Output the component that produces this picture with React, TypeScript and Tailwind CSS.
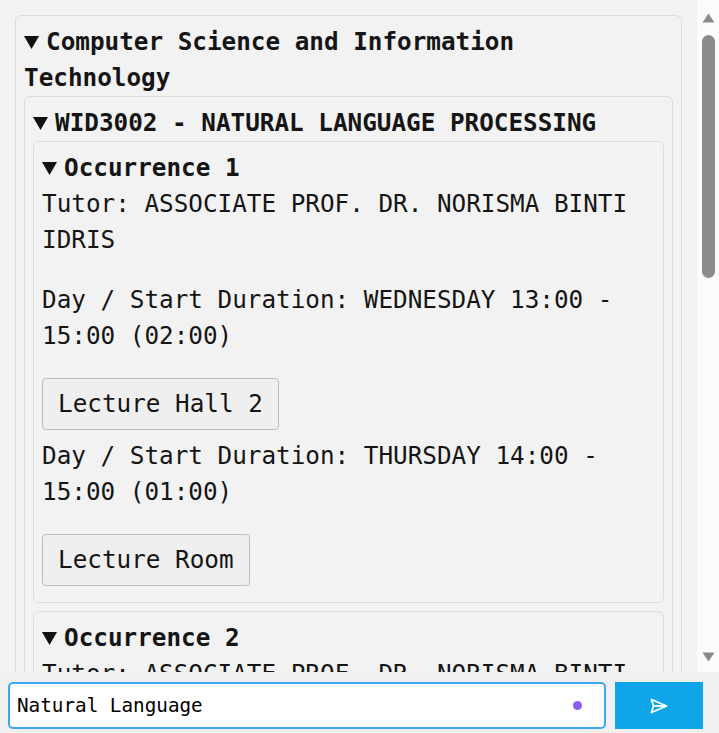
import React from "react";

const font = { fontFamily: '"DejaVu Sans Mono", "Liberation Mono", monospace' };

function Summary({ children }: { children: React.ReactNode }) {
  return (
    <summary className="block list-none font-bold [&::-webkit-details-marker]:hidden">
      <svg width="15" height="13" viewBox="0 0 15 13" className="mr-[7px] inline-block align-[1px]">
        <path d="M0 0 L15 0 L7.5 13 Z" fill="#111" />
      </svg>
      {children}
    </summary>
  );
}

function Session({ day, room }: { day: string; room: string }) {
  return (
    <>
      <p className="mb-6">{day}</p>
      <button className="mb-2 block rounded-[4px] border border-[#bdbdbd] bg-[#efefef] px-[15px] py-2 text-left leading-[34px]">
        {room}
      </button>
    </>
  );
}

function Occurrence({ n }: { n: number }) {
  return (
    <details open className="rounded-[6px] border border-[#dcdcdc] p-2">
      <Summary>Occurrence {n}</Summary>
      <p className="mb-6">Tutor: ASSOCIATE PROF. DR. NORISMA BINTI IDRIS</p>
      <Session day="Day / Start Duration: WEDNESDAY 13:00 - 15:00 (02:00)" room="Lecture Hall 2" />
      <Session day="Day / Start Duration: THURSDAY 14:00 - 15:00 (01:00)" room="Lecture Room" />
    </details>
  );
}

export default function App() {
  return (
    <div
      className="flex h-[733px] w-[719px] flex-col overflow-hidden bg-[#f2f2f2] text-[24.3px] leading-[36px] text-[#151515]"
      style={font}
    >
      <div className="flex min-h-0 flex-1">
        <div className="min-w-0 flex-1 overflow-hidden px-[15px] pt-[15px]">
          <details open className="rounded-[6px] border border-[#dcdcdc] p-2">
            <Summary>Computer Science and Information Technology</Summary>
            <details open className="rounded-[6px] border border-[#dcdcdc] p-2">
              <Summary>WID3002 - NATURAL LANGUAGE PROCESSING</Summary>
              <div className="flex flex-col gap-2">
                <Occurrence n={1} />
                <Occurrence n={2} />
              </div>
            </details>
          </details>
        </div>
        <div className="flex w-[22px] flex-col items-center bg-[#fbfbfb] pt-[13px] pb-[10px]">
          <svg width="13" height="10" viewBox="0 0 13 10">
            <path d="M6.5 0.5 L12.5 9.5 L0.5 9.5 Z" fill="#8a8a8a" />
          </svg>
          <div className="mt-[12px] h-[243px] w-[13px] rounded-full bg-[#8c8c8c]" />
          <div className="flex-1" />
          <svg width="13" height="10" viewBox="0 0 13 10">
            <path d="M0.5 0.5 L12.5 0.5 L6.5 9.5 Z" fill="#8a8a8a" />
          </svg>
        </div>
      </div>
      <div className="flex h-[61px] shrink-0 items-start gap-[9px] bg-[#f0f0f0] pt-[10px] pr-4 pl-2">
        <div className="relative h-[47px] flex-1">
          <input
            defaultValue="Natural Language"
            className="h-full w-full rounded-[5px] border-2 border-[#3aa8ef] bg-white pl-[7px] text-[19.3px] text-black outline-none"
            style={font}
          />
          <div className="absolute top-[19px] right-[24px] h-[9px] w-[9px] rounded-full bg-[#8b5cf6]" />
        </div>
        <button className="flex h-[47px] w-[88px] items-center justify-center bg-[#0ea5e9]">
          <svg width="18" height="16" viewBox="0 0 18 16" fill="none" stroke="white" strokeWidth="1.8" strokeLinejoin="round">
            <path d="M1.5 1.5 L16.5 8 L1.5 14.5 L3.5 8 Z" />
            <path d="M3.5 8 L16.5 8" />
          </svg>
        </button>
      </div>
    </div>
  );
}
